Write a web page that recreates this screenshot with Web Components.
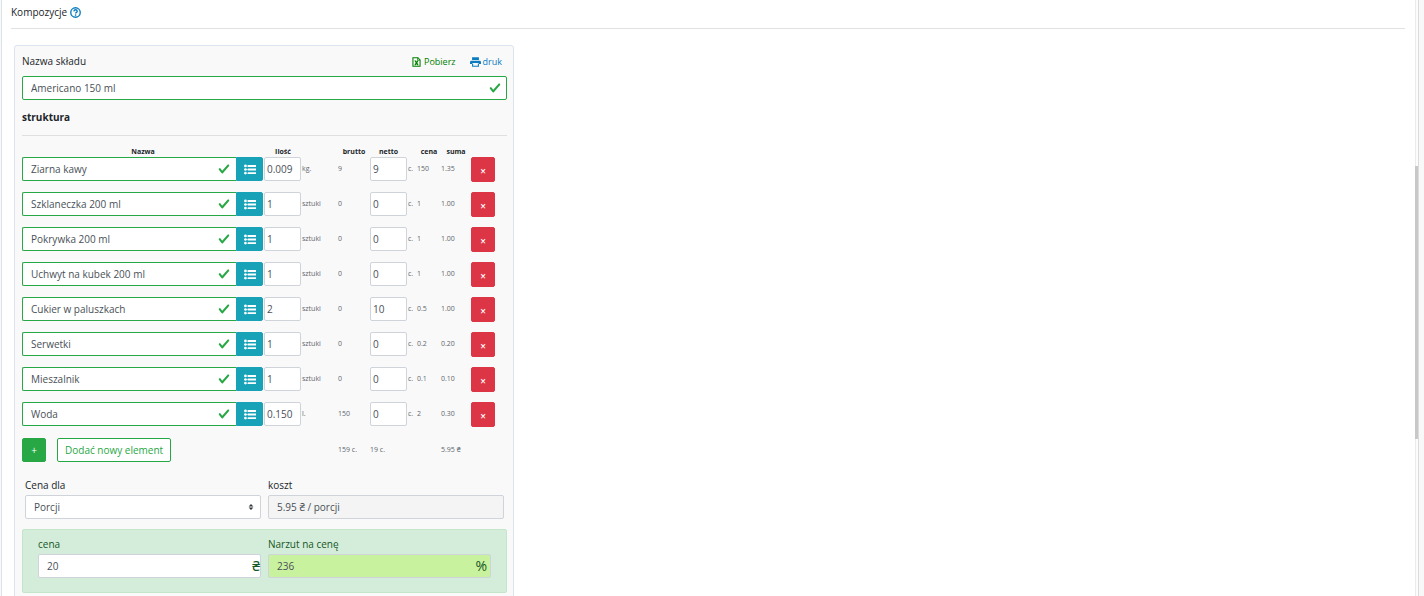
<!DOCTYPE html>
<html lang="pl">
<head>
<meta charset="utf-8">
<meta name="viewport" content="width=device-width, initial-scale=1">
<title>Kompozycje</title>
<style>
  body { margin: 0; background: #fff; color: #212529; font: 10px/16px "Open Sans", "Noto Sans", sans-serif; }
</style>
</head>
<body>
<page-shell>
  <section-heading>Kompozycje</section-heading>
  <composition-card></composition-card>
</page-shell>

<script>
const define = (name, html, setup) => {
  const template = document.createElement('template');
  template.innerHTML = '<style>:host,*{box-sizing:border-box}</style>' + html;
  customElements.define(name, class extends HTMLElement {
    connectedCallback() {
      if (this.shadowRoot) return;
      this.attachShadow({ mode: 'open' }).append(template.content.cloneNode(true));
      if (setup) setup(this, this.shadowRoot);
    }
  });
};

const icons = {
  help: ['0 0 16 16', '<circle cx="8" cy="8" r="6.9" fill="none" stroke="currentColor" stroke-width="2"/><path d="M5.6 6.3C5.8 4.8 6.8 4 8.1 4c1.4 0 2.4.8 2.4 2 0 1.8-2.3 1.8-2.3 3.4" fill="none" stroke="currentColor" stroke-width="2"/><circle cx="8.1" cy="11.8" r="1.2"/>'],
  excel: ['0 0 12 14', '<path d="M1 1h7l3 3v9H1z" fill="none" stroke="currentColor" stroke-width="1.5"/><path d="M7.5 1v3.500H11" fill="none" stroke="currentColor"/><path d="M3 5h2.300L6 6.600 6.800 5H9L7.200 8.200 9 11.500H6.800L6 9.800l-.8 1.700H3l1.800-3.300z"/>'],
  print: ['0 0 16 14', '<path d="M3 0h10v4H3zM2 5h12c1.100 0 2 .9 2 2v3h-3V8.500H3V10H0V7c0-1.100.9-2 2-2z"/><path d="M3.800 9v4.200h8.400V9" fill="none" stroke="currentColor" stroke-width="1.600"/>'],
  list: ['0 0 16 14', '<path d="M5 1h11v2.500H5zM5 5.750h11v2.500H5zM5 10.500h11V13H5z"/><path d="M1 2h5v.6H1zM1 6.700h5v.6H1zM1 11.500h5v.6H1z"/><circle cx="1.900" cy="2.200" r="1.800"/><circle cx="1.900" cy="7" r="1.800"/><circle cx="1.900" cy="11.800" r="1.800"/>'],
  check: ['0 0 8 8', '<path d="M2.3 6.73L.6 4.53c-.4-1.04.46-1.4 1.1-.8l1.1 1.4 3.4-3.8c.6-.63 1.6-.27 1.2.7l-4 4.6c-.43.5-.8.4-1.1.1z"/>'],
  sort: ['0 0 4 5', '<path d="M2 0L0 2h4zm0 5L0 3h4z"/>']
};

define('ui-icon', `
  <style>
    :host { display: inline-block; width: 10px; height: 10px; flex: none; }
    svg { display: block; width: 100%; height: 100%; fill: currentColor; }
  </style>
  <svg aria-hidden="true"></svg>`, (host, root) => {
  const [box, shape] = icons[host.getAttribute('name')];
  const svg = root.querySelector('svg');
  svg.setAttribute('viewBox', box);
  svg.innerHTML = shape;
});

define('page-shell', `
  <style>
    :host { display: flex; height: 100vh; overflow: hidden; }
    .edge { width: 2px; border-right: 1px solid #dee2e6; background: #f8f9fa; flex: none; }
    main { flex: 1; min-width: 0; overflow: hidden; padding: 0 10px 0 9px; }
    .track { display: flex; flex-direction: column; width: 4px; border-left: 1px solid #ebebeb; border-right: 1px solid #dcdcdc; background: #fcfcfc; flex: none; }
    .before { flex: 166; }
    .thumb { flex: 273; background: #c8c8c8; margin-left: -1px; }
    .after { flex: 157; }
    .gutter { width: 5px; background: #f8f8f8; flex: none; }
  </style>
  <div class="edge"></div>
  <main><slot></slot></main>
  <div class="track"><div class="before"></div><div class="thumb"></div><div class="after"></div></div>
  <div class="gutter"></div>`);

define('section-heading', `
  <style>
    :host { display: block; border-bottom: 1px solid #e1e1e1; padding: 4px 0 7px; }
    h1 { display: flex; align-items: center; gap: 3px; margin: 0; font-size: 10px; line-height: 17px; font-weight: 500; }
    a { color: #0c7cbf; display: flex; }
    ui-icon { width: 11px; height: 11px; }
  </style>
  <h1><slot></slot><a href="#help" aria-label="Pomoc"><ui-icon name="help"></ui-icon></a></h1>`);

define('text-field', `
  <style>
    :host { display: block; min-width: 0; }
    label { display: block; line-height: 16px; margin-bottom: 2px; }
    label:empty { display: none; }
    .box { position: relative; display: flex; }
    input { width: 100%; min-width: 0; height: 24px; margin: 0; padding: 0 8px; border: 1px solid #ced4da; border-radius: 2px; background: var(--field-bg, #fff); color: #495057; font: inherit; outline: 0; }
    ui-icon { display: none; position: absolute; right: 6px; top: 6px; width: 12px; height: 12px; color: #28a745; }
    :host([valid]) input { border-color: #28a745; }
    :host([valid]) ui-icon { display: block; }
    :host([joined]) input { border-right: 0; border-radius: 2px 0 0 2px; }
    :host([compact]) input { padding: 0 2px; }
    .suffix { position: absolute; right: var(--suffix-inset, 1px); top: 0; font-size: 14px; line-height: 24px; color: #155724; }
  </style>
  <label for="field"></label>
  <div class="box"><input id="field"><span class="suffix"><slot></slot></span><ui-icon name="check"></ui-icon></div>`, (host, root) => {
  const input = root.querySelector('input');
  const label = host.getAttribute('label');
  input.value = host.getAttribute('value');
  input.readOnly = host.hasAttribute('readonly');
  if (host.hasAttribute('quiet-label')) input.setAttribute('aria-label', label);
  else root.querySelector('label').textContent = label;
});

define('select-field', `
  <style>
    :host { display: block; min-width: 0; }
    label { display: block; line-height: 16px; margin-bottom: 2px; }
    .box { position: relative; }
    select { appearance: none; display: block; width: 100%; height: 24px; margin: 0; padding: 0 8px; border: 1px solid #ced4da; border-radius: 2px; background: #fff; color: #495057; font: inherit; }
    ui-icon { position: absolute; right: 7px; top: 9px; width: 6px; height: 6px; color: #343a40; pointer-events: none; }
  </style>
  <label for="basis">Cena dla</label>
  <div class="box"><select id="basis"><option>Porcji</option></select><ui-icon name="sort"></ui-icon></div>`);

define('ui-button', `
  <style>
    :host { display: block; flex: none; }
    button { display: flex; align-items: center; justify-content: center; width: 100%; height: var(--button-height, 24px); padding: 0 7px; margin: 0; border: 1px solid #28a745; border-radius: 2px; background: #28a745; color: #fff; font: inherit; cursor: pointer; white-space: nowrap; }
    :host([kind=outline]) button { background: #fff; color: #28a745; }
    :host([kind=danger]) button { background: #dc3545; border-color: #dc3545; padding-top: 2px; font-weight: 600; }
    :host([kind=info]) button { background: #17a2b8; border-color: #17a2b8; border-radius: 0 2px 2px 0; }
  </style>
  <button type="button"><slot></slot></button>`, (host, root) => {
  if (host.title) root.querySelector('button').setAttribute('aria-label', host.title);
});

define('ingredient-table', `
  <style>
    :host { display: block; }
    table { width: 100%; table-layout: fixed; border-collapse: collapse; }
    th, td { padding: 0; text-align: left; font-size: 7px; vertical-align: top; white-space: nowrap; }
    th { height: 10px; line-height: 10px; font-weight: 700; text-align: center; }
    td { height: 35px; line-height: 24px; color: #5f676e; }
    tfoot td { padding-top: 1px; height: 25px; }
    .pair { display: flex; margin-right: 1px; font-size: 10px; }
    .pair text-field { flex: 1; }
    .pair ui-button { width: 27px; }
    .pair ui-icon { width: 12px; height: 11px; }
    text-field { font-size: 10px; }
    .number text-field { margin-right: 1px; }
    .netto text-field { margin-right: 0; }
    .remove ui-button { width: 24px; --button-height: 25px; font-size: 10px; }
    .actions { display: flex; gap: 11px; font-size: 10px; }
    .add { width: 24px; }
    .gram { padding-left: 1px; }
  </style>
  <table>
    <colgroup><col><col style="width:38px"><col style="width:36px"><col style="width:32px"><col style="width:37px"><col style="width:10px"><col style="width:24px"><col style="width:30px"><col style="width:36px"></colgroup>
    <thead><tr><th>Nazwa</th><th>Ilość</th><th></th><th>brutto</th><th>netto</th><th></th><th>cena</th><th>suma</th><th></th></tr></thead>
    <tbody></tbody>
    <tfoot><tr>
      <td colspan="3"><div class="actions"><ui-button class="add" title="Dodać">+</ui-button><ui-button kind="outline">Dodać nowy element</ui-button></div></td>
      <td>159 c.</td><td>19 c.</td><td></td><td></td><td>5.95 ₴</td><td></td>
    </tr></tfoot>
  </table>`, (host, root) => {
  const rows = [
    ['Ziarna kawy', '0.009', 'kg.', '9', '9', '150', '1.35'],
    ['Szklaneczka 200 ml', '1', 'sztuki', '0', '0', '1', '1.00'],
    ['Pokrywka 200 ml', '1', 'sztuki', '0', '0', '1', '1.00'],
    ['Uchwyt na kubek 200 ml', '1', 'sztuki', '0', '0', '1', '1.00'],
    ['Cukier w paluszkach', '2', 'sztuki', '0', '10', '0.5', '1.00'],
    ['Serwetki', '1', 'sztuki', '0', '0', '0.2', '0.20'],
    ['Mieszalnik', '1', 'sztuki', '0', '0', '0.1', '0.10'],
    ['Woda', '0.150', 'l.', '150', '0', '2', '0.30']
  ];
  root.querySelector('tbody').innerHTML = rows.map(([name, qty, unit, gross, net, price, sum]) => `
    <tr>
      <td><div class="pair"><text-field valid joined quiet-label label="Nazwa" value="${name}"></text-field><ui-button kind="info" title="Lista"><ui-icon name="list"></ui-icon></ui-button></div></td>
      <td class="number"><text-field compact quiet-label label="Ilość" value="${qty}"></text-field></td>
      <td>${unit}</td>
      <td>${gross}</td>
      <td class="number netto"><text-field compact quiet-label label="netto" value="${net}"></text-field></td>
      <td class="gram">c.</td>
      <td>${price}</td>
      <td>${sum}</td>
      <td class="remove"><ui-button kind="danger" title="Usuń">×</ui-button></td>
    </tr>`).join('');
});

define('price-panel', `
  <style>
    :host { display: grid; grid-template-columns: 1fr 1fr; gap: 7px; padding: 6px 15px 14px; border: 1px solid #c3e6cb; border-radius: 2px; background: #d4edda; color: #155724; }
    .markup { --field-bg: #c9f29f; --suffix-inset: 4px; }
  </style>
  <text-field label="cena" value="20">₴</text-field>
  <text-field class="markup" label="Narzut na cenę" value="236">%</text-field>`);

define('composition-card', `
  <style>
    :host { display: block; max-width: 500px; margin: 16px 0 0 3px; padding: 7px 6px 14px 7px; border: 1px solid #dbe4ef; border-radius: 3px; background: #f9f9f9; }
    header { display: flex; align-items: center; height: 16px; margin-bottom: 7px; }
    header span { flex: 1; }
    a { display: flex; align-items: center; gap: 2px; color: #0c7cbf; font-size: 9px; text-decoration: none; margin-right: 5px; padding-top: 2px; }
    a.download { color: #008000; margin-right: 14px; }
    a ui-icon { width: 11px; height: 10px; }
    h2 { margin: 9px 0; font-size: 10px; line-height: 17px; font-weight: 700; }
    hr { margin: 0 0 11px; border: 0; border-top: 1px solid #dfdfdf; }
    .summary { display: grid; grid-template-columns: 1fr 1fr; gap: 7px; padding: 0 3px; margin: 15px 0 10px; }
    .cost { --field-bg: #f4f4f4; }
  </style>
  <header><span>Nazwa składu</span><a class="download" href="#pobierz"><ui-icon name="excel"></ui-icon>Pobierz</a><a href="#druk"><ui-icon name="print"></ui-icon>druk</a></header>
  <text-field valid quiet-label label="Nazwa składu" value="Americano 150 ml"></text-field>
  <h2>struktura</h2>
  <hr>
  <ingredient-table></ingredient-table>
  <div class="summary">
    <select-field></select-field>
    <text-field class="cost" readonly label="koszt" value="5.95 ₴ / porcji"></text-field>
  </div>
  <price-panel></price-panel>`);
</script>
</body>
</html>
